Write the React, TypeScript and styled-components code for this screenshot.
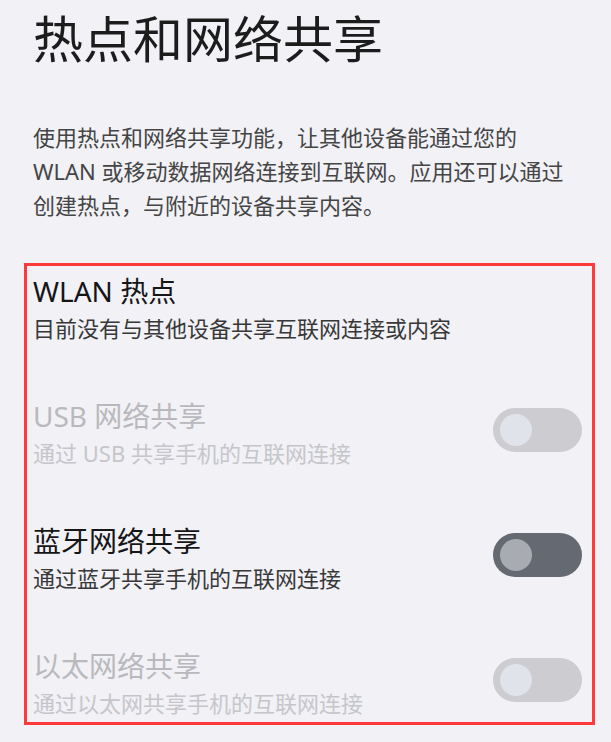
import React from "react";
import styled, { createGlobalStyle } from "styled-components";

type ShareItem = {
  title: string;
  desc: string;
  disabled?: boolean;
  toggle?: boolean;
};

const items: ShareItem[] = [
  { title: "WLAN 热点", desc: "目前没有与其他设备共享互联网连接或内容" },
  { title: "USB 网络共享", desc: "通过 USB 共享手机的互联网连接", disabled: true, toggle: true },
  { title: "蓝牙网络共享", desc: "通过蓝牙共享手机的互联网连接", toggle: true },
  { title: "以太网络共享", desc: "通过以太网共享手机的互联网连接", disabled: true, toggle: true },
];

const App = () => {
  return (
    <Page>
      <GlobalStyle />
      <Title>热点和网络共享</Title>
      <Intro>
        使用热点和网络共享功能，让其他设备能通过您的
        <br />
        WLAN 或移动数据网络连接到互联网。应用还可以通过
        <br />
        创建热点，与附近的设备共享内容。
      </Intro>
      <ListBox>
        {items.map((item) => (
          <Row key={item.title}>
            <TextCol>
              <RowTitle $disabled={item.disabled}>{item.title}</RowTitle>
              <RowDesc $disabled={item.disabled}>{item.desc}</RowDesc>
            </TextCol>
            {item.toggle && (
              <Switch $disabled={item.disabled}>
                <Knob $disabled={item.disabled} />
              </Switch>
            )}
          </Row>
        ))}
      </ListBox>
    </Page>
  );
};

export default App;

const GlobalStyle = createGlobalStyle`
  html, body {
    margin: 0;
    padding: 0;
    background: #f1f1f6;
  }
  body {
    font-family: "Noto Sans", "Noto Sans CJK SC", sans-serif;
  }
`;

const Page = styled.div`
  display: flex;
  flex-direction: column;
  width: 611px;
  min-height: 742px;
  background: #f1f1f6;
  box-sizing: border-box;
  padding-top: 9px;
`;

const Title = styled.h1`
  margin: 0 0 0 33px;
  font-size: 50px;
  line-height: 60px;
  font-weight: 400;
  color: #1c1c1c;
`;

const Intro = styled.p`
  margin: 51px 0 0 33px;
  font-size: 22px;
  line-height: 34px;
  color: #454545;
`;

const ListBox = styled.div`
  display: flex;
  flex-direction: column;
  gap: 51px;
  margin: 41px 0 0 24px;
  width: 571px;
  box-sizing: border-box;
  border: 3px solid #fc3a3a;
  padding: 5px 10px 2px 6px;
`;

const Row = styled.div`
  display: flex;
  align-items: center;
  justify-content: space-between;
`;

const TextCol = styled.div`
  display: flex;
  flex-direction: column;
`;

const RowTitle = styled.div<{ $disabled?: boolean }>`
  font-size: 28px;
  line-height: 40px;
  color: ${(p) => (p.$disabled ? "#b9b9bd" : "#161616")};
`;

const RowDesc = styled.div<{ $disabled?: boolean }>`
  font-size: 22px;
  line-height: 34px;
  color: ${(p) => (p.$disabled ? "#c6c6ca" : "#383838")};
`;

const Switch = styled.div<{ $disabled?: boolean }>`
  display: flex;
  align-items: center;
  width: 89px;
  height: 44px;
  margin-bottom: 6px;
  box-sizing: border-box;
  padding-left: 7px;
  border-radius: 22px;
  background: ${(p) => (p.$disabled ? "#cdcdd1" : "#656972")};
`;

const Knob = styled.div<{ $disabled?: boolean }>`
  width: 32px;
  height: 32px;
  border-radius: 50%;
  background: ${(p) => (p.$disabled ? "#e0e3ea" : "#a9abb3")};
`;
